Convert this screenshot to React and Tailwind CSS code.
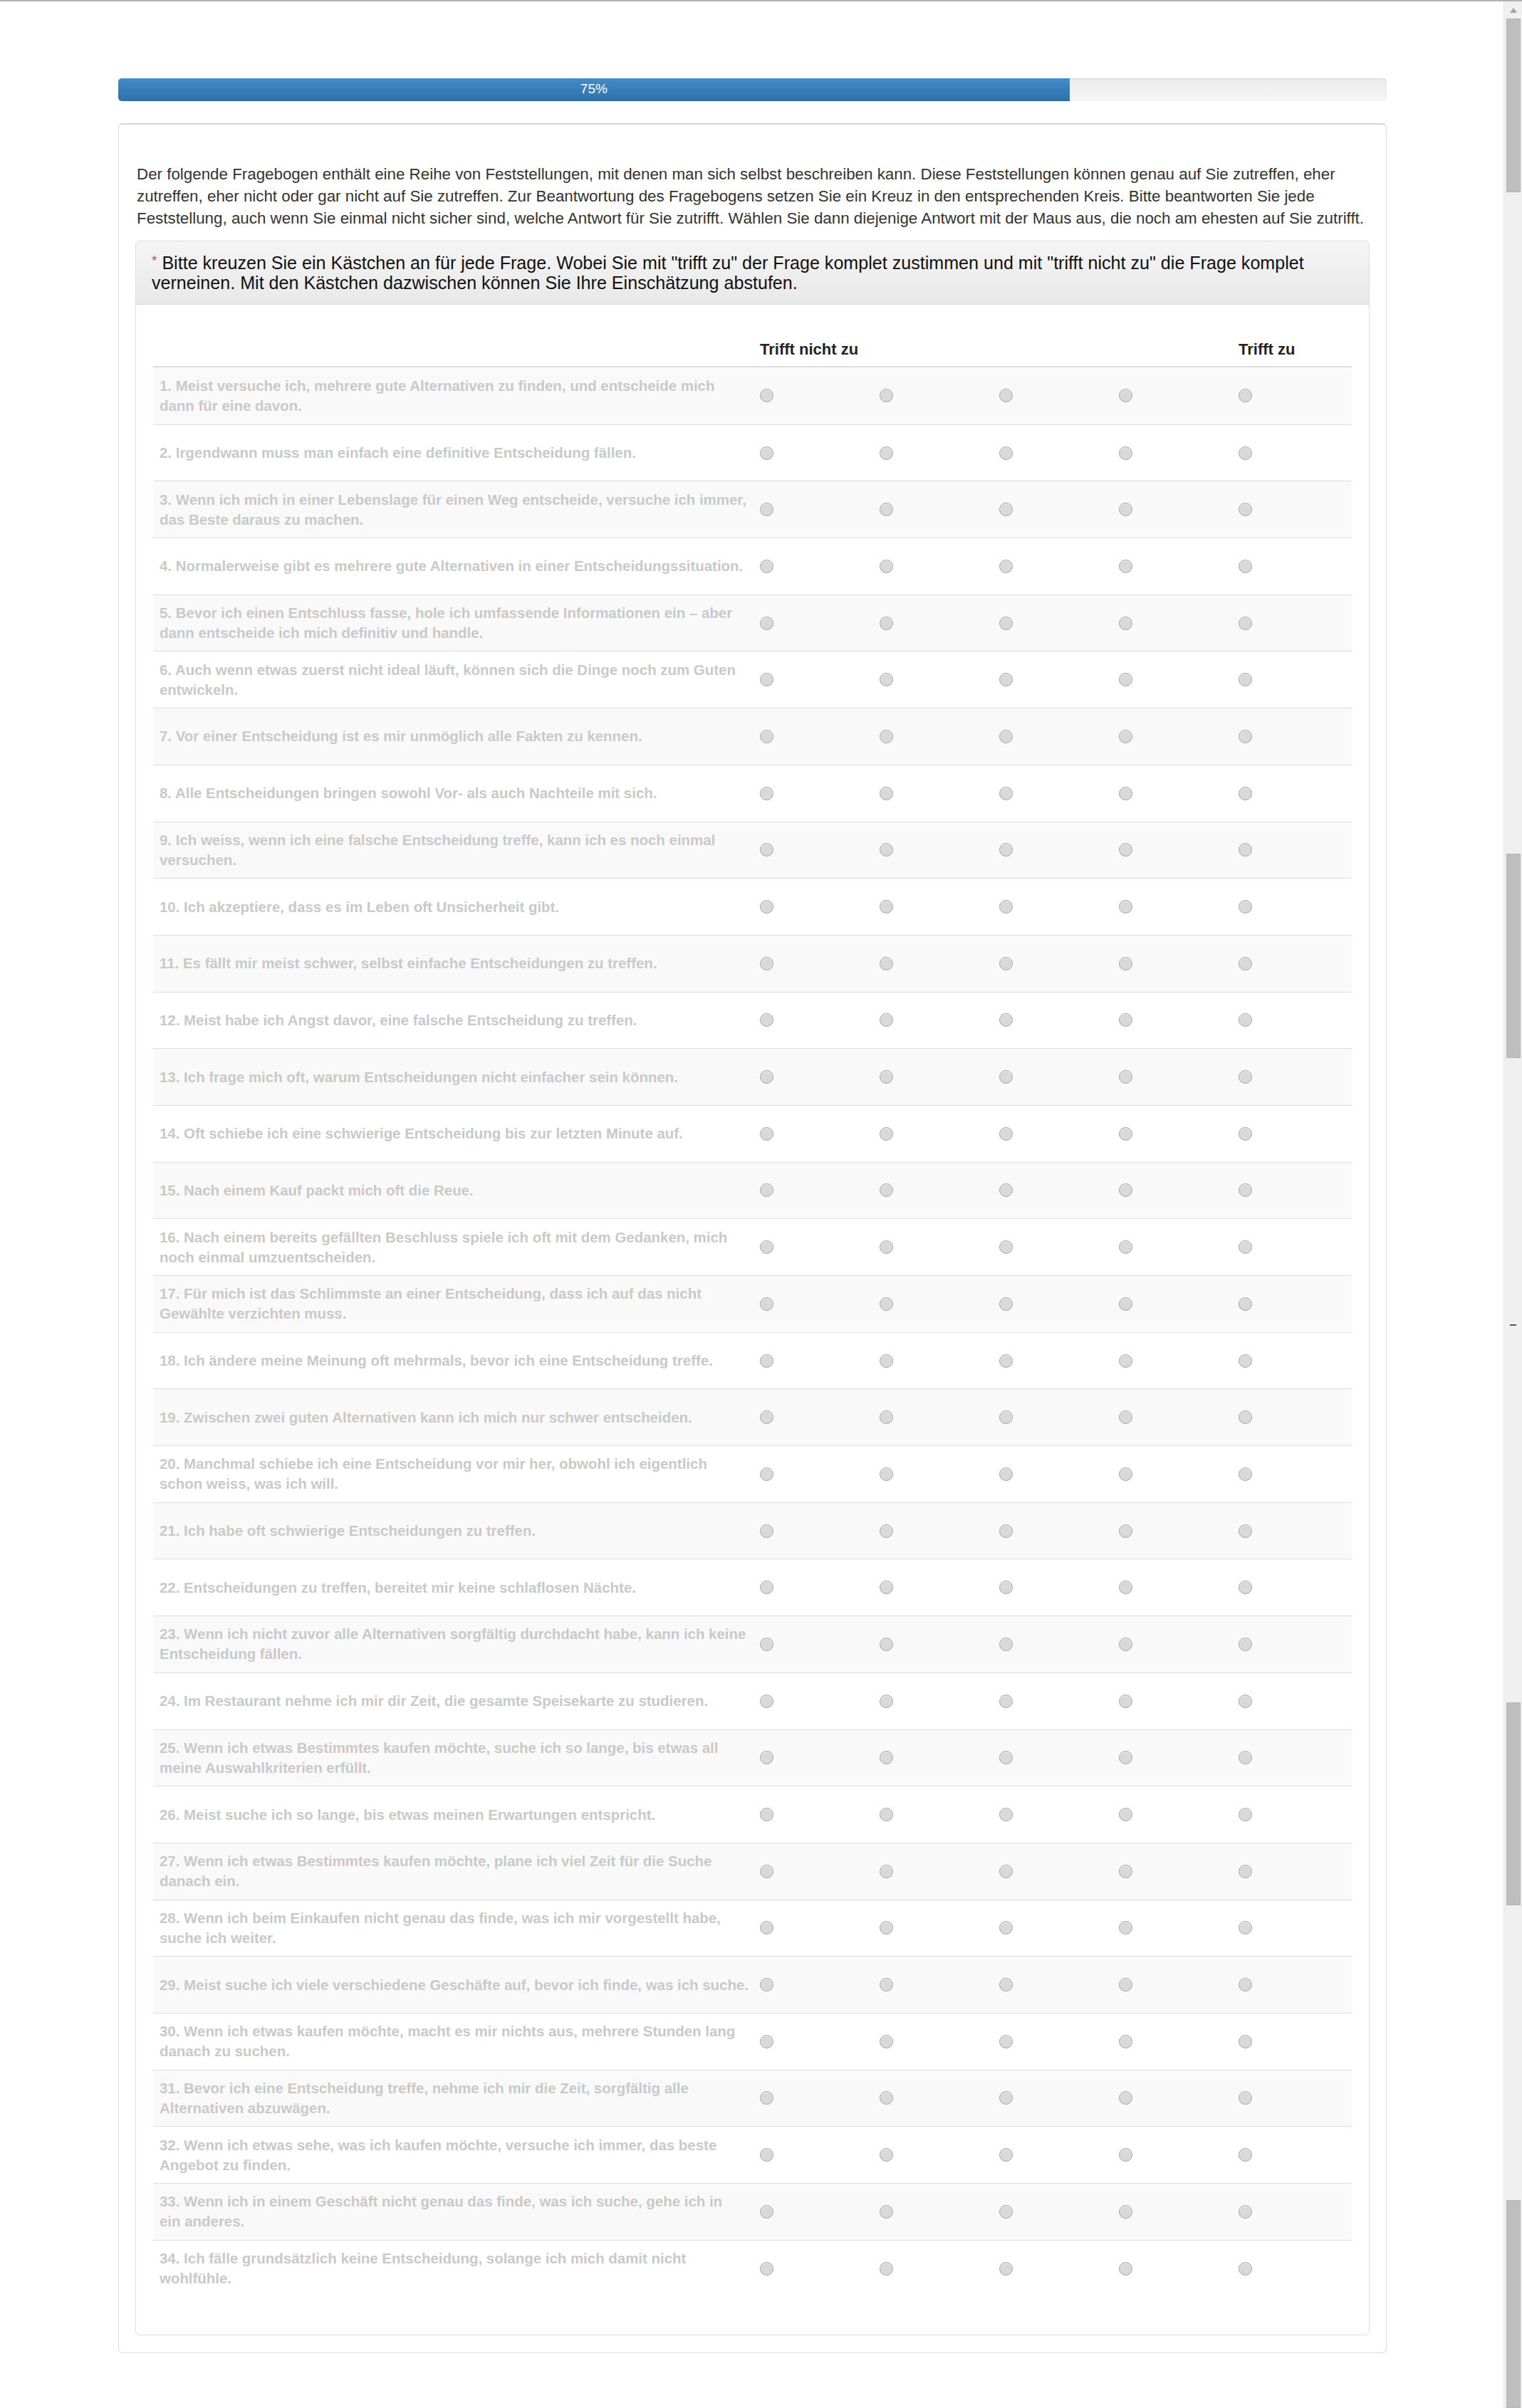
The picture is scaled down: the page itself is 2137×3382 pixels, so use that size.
import React from 'react';

const questions = [
  "1. Meist versuche ich, mehrere gute Alternativen zu finden, und entscheide mich dann für eine davon.",
  "2. Irgendwann muss man einfach eine definitive Entscheidung fällen.",
  "3. Wenn ich mich in einer Lebenslage für einen Weg entscheide, versuche ich immer, das Beste daraus zu machen.",
  "4. Normalerweise gibt es mehrere gute Alternativen in einer Entscheidungssituation.",
  "5. Bevor ich einen Entschluss fasse, hole ich umfassende Informationen ein – aber dann entscheide ich mich definitiv und handle.",
  "6. Auch wenn etwas zuerst nicht ideal läuft, können sich die Dinge noch zum Guten entwickeln.",
  "7. Vor einer Entscheidung ist es mir unmöglich alle Fakten zu kennen.",
  "8. Alle Entscheidungen bringen sowohl Vor- als auch Nachteile mit sich.",
  "9. Ich weiss, wenn ich eine falsche Entscheidung treffe, kann ich es noch einmal versuchen.",
  "10. Ich akzeptiere, dass es im Leben oft Unsicherheit gibt.",
  "11. Es fällt mir meist schwer, selbst einfache Entscheidungen zu treffen.",
  "12. Meist habe ich Angst davor, eine falsche Entscheidung zu treffen.",
  "13. Ich frage mich oft, warum Entscheidungen nicht einfacher sein können.",
  "14. Oft schiebe ich eine schwierige Entscheidung bis zur letzten Minute auf.",
  "15. Nach einem Kauf packt mich oft die Reue.",
  "16. Nach einem bereits gefällten Beschluss spiele ich oft mit dem Gedanken, mich noch einmal umzuentscheiden.",
  "17. Für mich ist das Schlimmste an einer Entscheidung, dass ich auf das nicht Gewählte verzichten muss.",
  "18. Ich ändere meine Meinung oft mehrmals, bevor ich eine Entscheidung treffe.",
  "19. Zwischen zwei guten Alternativen kann ich mich nur schwer entscheiden.",
  "20. Manchmal schiebe ich eine Entscheidung vor mir her, obwohl ich eigentlich schon weiss, was ich will.",
  "21. Ich habe oft schwierige Entscheidungen zu treffen.",
  "22. Entscheidungen zu treffen, bereitet mir keine schlaflosen Nächte.",
  "23. Wenn ich nicht zuvor alle Alternativen sorgfältig durchdacht habe, kann ich keine Entscheidung fällen.",
  "24. Im Restaurant nehme ich mir dir Zeit, die gesamte Speisekarte zu studieren.",
  "25. Wenn ich etwas Bestimmtes kaufen möchte, suche ich so lange, bis etwas all meine Auswahlkriterien erfüllt.",
  "26. Meist suche ich so lange, bis etwas meinen Erwartungen entspricht.",
  "27. Wenn ich etwas Bestimmtes kaufen möchte, plane ich viel Zeit für die Suche danach ein.",
  "28. Wenn ich beim Einkaufen nicht genau das finde, was ich mir vorgestellt habe, suche ich weiter.",
  "29. Meist suche ich viele verschiedene Geschäfte auf, bevor ich finde, was ich suche.",
  "30. Wenn ich etwas kaufen möchte, macht es mir nichts aus, mehrere Stunden lang danach zu suchen.",
  "31. Bevor ich eine Entscheidung treffe, nehme ich mir die Zeit, sorgfältig alle Alternativen abzuwägen.",
  "32. Wenn ich etwas sehe, was ich kaufen möchte, versuche ich immer, das beste Angebot zu finden.",
  "33. Wenn ich in einem Geschäft nicht genau das finde, was ich suche, gehe ich in ein\u00a0anderes.",
  "34. Ich fälle grundsätzlich keine Entscheidung, solange ich mich damit nicht wohlfühle.",
];

const grid = "grid grid-cols-[843px_168px_168px_168px_168px_168px]";

const Radio = () => (
  <div className="px-[9px] flex items-center">
    <span className="w-[19px] h-[19px] rounded-full bg-[#d9d9d9] border border-[#a5a5a5] shadow-[inset_0_1px_1px_rgba(255,255,255,0.6)]" />
  </div>
);

const Row = ({ text, index }) => {
  let rowClass = grid + " h-[79.7px]";
  if (index % 2 === 0) {
    rowClass += " bg-[#f9f9f9]";
  } else {
    rowClass += " bg-white";
  }
  if (index > 0) {
    rowClass += " border-t border-[#dddddd]";
  }

  return (
    <div className={rowClass}>
      <div className="pl-[9px] pr-[3px] flex items-center text-[20.45px] leading-[28px] font-bold text-[#c9c9c9]">
        {text}
      </div>
      <Radio />
      <Radio />
      <Radio />
      <Radio />
      <Radio />
    </div>
  );
};

const Thumb = ({ h }) => (
  <div className={"w-[20px] bg-[#bebebe] border border-[#b5b5b5] " + h} />
);

const Scrollbar = () => (
  <div className="w-[26px] shrink-0 bg-[#f0f0f0] border-l border-[#e6e6e6] flex flex-col items-center">
    <div className="h-[24px] flex items-center justify-center">
      <span className="w-0 h-0 border-l-[5px] border-r-[5px] border-b-[7px] border-l-transparent border-r-transparent border-b-[#a3a3a3]" />
    </div>
    <Thumb h="h-[244px]" />
    <div className="h-[929px]" />
    <Thumb h="h-[287px]" />
    <div className="h-[374px]" />
    <div className="w-[9px] h-[2px] bg-[#555]" />
    <div className="h-[529px]" />
    <Thumb h="h-[285px]" />
    <div className="h-[414px]" />
    <Thumb h="flex-1" />
  </div>
);

export default function App() {
  return (
    <div className="w-[2137px] h-[3382px] flex bg-white border-t-2 border-[#b2b2b2] font-['Liberation_Sans',Arial,sans-serif] overflow-hidden">
      <div className="flex-1 pt-[108px]">
        {/* progress */}
        <div className="ml-[166px] w-[1781px] h-[32px] rounded-[5px] overflow-hidden flex bg-gradient-to-b from-[#ebebeb] to-[#f5f5f5] shadow-[inset_0_1px_2px_rgba(0,0,0,0.1)]">
          <div className="w-[75%] h-full bg-gradient-to-b from-[#428bca] to-[#3071a9] border-b border-[#2c6699] flex items-center justify-center text-white text-[19px]">
            75%
          </div>
        </div>

        {/* outer panel */}
        <div className="ml-[166px] mt-[31px] w-[1781px] border border-[#dcdcdc] border-t-2 border-t-[#d6d6d6] rounded-[6px] pt-[54px] px-[23px] pb-[24px]">
          <p className="pl-[2px] text-[22.35px] leading-[31px] text-[#333]">
            Der folgende Fragebogen enthält eine Reihe von Feststellungen, mit denen man sich selbst beschreiben kann. Diese Feststellungen können genau auf Sie zutreffen, eher zutreffen, eher nicht oder gar nicht auf Sie zutreffen. Zur Beantwortung des Fragebogens setzen Sie ein Kreuz in den entsprechenden Kreis. Bitte beantworten Sie jede Feststellung, auch wenn Sie einmal nicht sicher sind, welche Antwort für Sie zutrifft. Wählen Sie dann diejenige Antwort mit der Maus aus, die noch am ehesten auf Sie zutrifft.
          </p>

          <div className="mt-[16px] border border-[#dddddd] rounded-[6px] overflow-hidden">
            <div className="px-[22px] py-[16px] bg-gradient-to-b from-[#f5f5f5] to-[#e8e8e8] border-b border-[#dddddd] text-[25.1px] leading-[28px] text-[#111]">
              <span className="inline-block align-top text-[#c0504d] text-[19px] leading-[22px]">*</span> Bitte kreuzen Sie ein Kästchen an für jede Frage. Wobei Sie mit "trifft zu" der Frage komplet zustimmen und mit "trifft nicht zu" die Frage komplet verneinen. Mit den Kästchen dazwischen können Sie Ihre Einschätzung abstufen.
            </div>

            <div className="px-[24px] pt-[24px] pb-[54px]">
              <div className={grid + " h-[64px] border-b-2 border-[#dddddd] text-[22px] leading-[31px] font-bold text-[#222]"}>
                <div />
                <div className="px-[9px] self-end pb-[8px] whitespace-nowrap">Trifft nicht zu</div>
                <div />
                <div />
                <div />
                <div className="px-[9px] self-end pb-[8px] whitespace-nowrap">Trifft zu</div>
              </div>
              {questions.map((q, i) => (
                <Row key={i} text={q} index={i} />
              ))}
            </div>
          </div>
        </div>
      </div>
      <Scrollbar />
    </div>
  );
}
